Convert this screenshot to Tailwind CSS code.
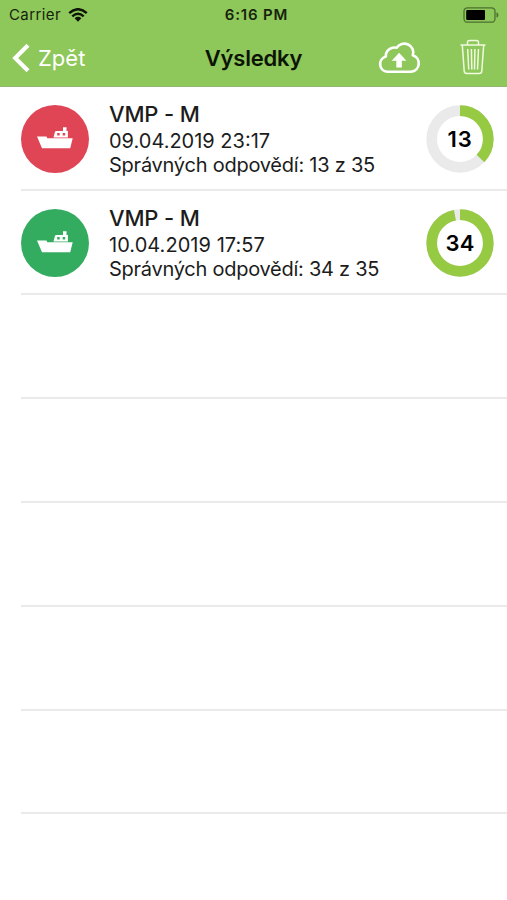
<!DOCTYPE html>
<html lang="cs">
<head>
<meta charset="utf-8">
<title>Výsledky</title>
<script src="https://cdn.jsdelivr.net/npm/@tailwindcss/browser@4"></script>
</head>
<body class="w-[507px] h-[900px] overflow-hidden bg-white font-['Inter',sans-serif] text-[#1c1c1c]">
<svg class="hidden">
  <symbol id="ship" viewBox="0 0 36 22">
    <path fill="#fff" d="M0 9.500h9.500l.8 1.800h25.400l-2.500 9.900H5z"/>
    <path fill="#fff" fill-rule="evenodd" d="M16.500 10.400l1.500-5.600q.3-.9 1.300-.9H26V.3h3.500v3.600h1.400v6.500zM20.200 6v2.500h2.500V6zm5.500 0v2.500h2.500V6z"/>
  </symbol>
</svg>
<header class="h-[87px] bg-[#8ec75a] border-b border-[#92b772]">
  <div class="h-[29px] grid grid-cols-3 items-center pl-[9px] pr-[8px] text-[15px] leading-[18px] text-[#17230d]">
    <div class="flex items-center gap-[7px]">
      <span class="tracking-[0.4px]">Carrier</span>
      <svg class="w-[20px] h-[14px]" viewBox="0 0 20 14" fill="none" stroke="#0d1607" stroke-width="2.400">
        <path d="M1.200 5.200Q10-2.800 18.800 5.200M4.300 8.300Q10 3.200 15.700 8.300"/>
        <path fill="#0d1607" stroke="none" d="M6.600 10.200Q10 7.500 13.400 10.200L10 13.700z"/>
      </svg>
    </div>
    <span class="justify-self-center pl-[5px] font-semibold tracking-[0.85px] whitespace-nowrap">6:16 PM</span>
    <svg class="justify-self-end w-[36px] h-[16px]" viewBox="0 0 36 16">
      <rect x="1" y=".8" width="31" height="14.400" rx="3.500" fill="none" stroke="#4d7030" stroke-width="1.300"/>
      <rect x="3.200" y="3" width="18.800" height="10" rx="1" fill="#000"/>
      <path fill="#4d7030" d="M33.500 5.200q2 .5 2 2.800t-2 2.800z"/>
    </svg>
  </div>
  <div class="h-[57px] grid grid-cols-[170px_1fr_170px] items-center text-white">
    <div class="flex items-center pl-[12px] gap-[8px]">
      <svg class="w-[18px] h-[30px]" viewBox="0 0 18 30" fill="none" stroke="#fff" stroke-width="4.200"><path d="M16 2.200L3.200 15 16 27.800"/></svg>
      <span class="text-[22px] leading-[28px]">Zpět</span>
    </div>
    <h1 class="justify-self-center text-[22px] leading-[28px] tracking-[-0.2px] font-semibold text-[#0c1405]">Výsledky</h1>
    <div class="flex items-center justify-end gap-[39px] pr-[21px]">
      <svg class="w-[43px] h-[33px]" viewBox="0 0 42 33" preserveAspectRatio="none">
        <path d="M9 30.800a7.800 7.800 0 0 1-1.400-15.200 8.500 8.500 0 0 1 10.600-8.800A8.800 8.800 0 0 1 34 14.300a8.500 8.500 0 0 1-1.600 16.500z" fill="none" stroke="#fff" stroke-width="2.600" stroke-linejoin="round"/>
        <path fill="#fff" d="M20.600 11.700l7.200 8h-4.500v6.800h-5.400v-6.800h-4.500z"/>
      </svg>
      <svg class="w-[26px] h-[36px] -mt-[2px]" viewBox="0 0 26 36" fill="none" stroke="#f1fbe0" stroke-width="1.500">
        <path d="M.5 6h25M7.500 6V3.500Q7.500 1.500 9.500 1.500h7q2 0 2 2V6M2.300 6l1.900 26q.2 2.500 2.600 2.500h12.400q2.400 0 2.600-2.500l1.900-26M7.700 10l1 20.500M11.400 10l.4 20.500M14.900 10l-.4 20.500M18.500 10l-1 20.500"/>
      </svg>
    </div>
  </div>
</header>
<main>
  <div class="ml-[21px] h-[104px] border-b-2 border-[#eaeaec] flex items-center pr-[13px] pt-[2px]">
    <div class="size-[68px] rounded-full bg-[#e04556] flex items-center justify-center shrink-0"><svg class="w-[36px] h-[22px] -mt-[3px]"><use href="#ship"/></svg></div>
    <div class="ml-[20px] flex-1 whitespace-nowrap">
      <h2 class="-mt-px mb-px text-[22px] leading-[27px] tracking-[-0.15px] font-medium">VMP - M</h2>
      <p class="text-[20px] leading-[24px]">09.04.2019 23:17</p>
      <p class="text-[20px] leading-[24px] tracking-[-0.24px]">Správných odpovědí: 13 z 35</p>
    </div>
    <div class="grid size-[68px] place-items-center shrink-0">
      <svg class="col-start-1 row-start-1 size-[68px] -rotate-90" viewBox="0 0 68 68" fill="none" stroke-width="10.700">
        <circle cx="34" cy="34" r="28.300" stroke="#eaeaea"/>
        <circle cx="34" cy="34" r="28.300" stroke="#97ca43" pathLength="35" stroke-dasharray="13 35"/>
      </svg>
      <span class="col-start-1 row-start-1 text-[22px] leading-[28px] tracking-[0.8px] font-semibold text-black">13</span>
    </div>
  </div>
  <div class="ml-[21px] h-[104px] border-b-2 border-[#eaeaec] flex items-center pr-[13px] pt-[2px]">
    <div class="size-[68px] rounded-full bg-[#34ac60] flex items-center justify-center shrink-0"><svg class="w-[36px] h-[22px] -mt-[3px]"><use href="#ship"/></svg></div>
    <div class="ml-[20px] flex-1 whitespace-nowrap">
      <h2 class="-mt-px mb-px text-[22px] leading-[27px] tracking-[-0.15px] font-medium">VMP - M</h2>
      <p class="text-[20px] leading-[24px] tracking-[0.05px]">10.04.2019 17:57</p>
      <p class="text-[20px] leading-[24px] tracking-[-0.26px]">Správných odpovědí: 34 z 35</p>
    </div>
    <div class="grid size-[68px] place-items-center shrink-0">
      <svg class="col-start-1 row-start-1 size-[68px] -rotate-90" viewBox="0 0 68 68" fill="none" stroke-width="10.700">
        <circle cx="34" cy="34" r="28.300" stroke="#eaeaea"/>
        <circle cx="34" cy="34" r="28.300" stroke="#97ca43" pathLength="35" stroke-dasharray="34 35"/>
      </svg>
      <span class="col-start-1 row-start-1 text-[22px] leading-[28px] tracking-[0.3px] font-semibold text-black">34</span>
    </div>
  </div>
  <div class="ml-[21px] h-[104px] border-b-2 border-[#eaeaec]"></div>
  <div class="ml-[21px] h-[104px] border-b-2 border-[#eaeaec]"></div>
  <div class="ml-[21px] h-[104px] border-b-2 border-[#eaeaec]"></div>
  <div class="ml-[21px] h-[104px] border-b-2 border-[#eaeaec]"></div>
  <div class="ml-[21px] h-[103px] border-b-2 border-[#eaeaec]"></div>
</main>
</body>
</html>
